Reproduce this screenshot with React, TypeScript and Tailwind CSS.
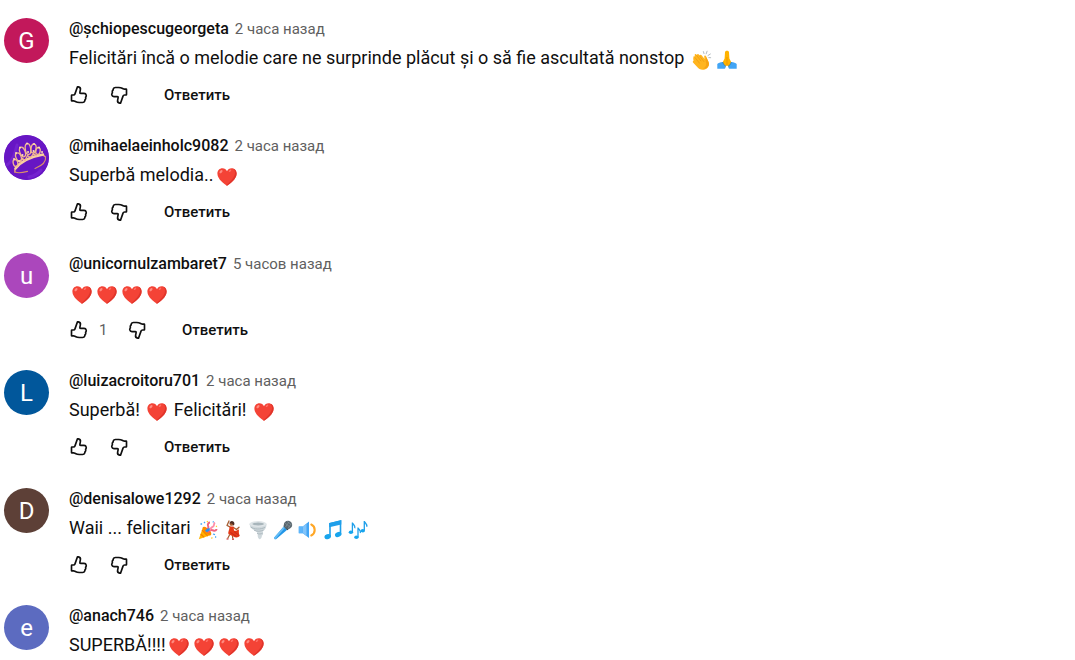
import React, { useState } from 'react';

type EmojiName =
  | 'heart'
  | 'clap'
  | 'pray'
  | 'party'
  | 'dancer'
  | 'tornado'
  | 'mic'
  | 'speaker'
  | 'note'
  | 'notes';

interface Comment {
  id: number;
  author: string;
  time: string;
  letter?: string;
  color: string;
  likes?: number;
  hideActions?: boolean;
  body: { text?: string; emoji?: EmojiName }[];
}

const heart = { emoji: 'heart' as const };

const comments: Comment[] = [
  {
    id: 1,
    author: '@șchiopescugeorgeta',
    time: '2 часа назад',
    letter: 'G',
    color: 'bg-[#c2185b]',
    body: [
      { text: 'Felicitări încă o melodie care ne surprinde plăcut și o să fie ascultată nonstop ' },
      { emoji: 'clap' },
      { emoji: 'pray' },
    ],
  },
  {
    id: 2,
    author: '@mihaelaeinholc9082',
    time: '2 часа назад',
    color: 'bg-[#6a1bc4]',
    body: [{ text: 'Superbă melodia..' }, heart],
  },
  {
    id: 3,
    author: '@unicornulzambaret7',
    time: '5 часов назад',
    letter: 'u',
    color: 'bg-[#ab47bc]',
    likes: 1,
    body: [heart, heart, heart, heart],
  },
  {
    id: 4,
    author: '@luizacroitoru701',
    time: '2 часа назад',
    letter: 'L',
    color: 'bg-[#01579b]',
    body: [{ text: 'Superbă! ' }, heart, { text: ' Felicitări! ' }, heart],
  },
  {
    id: 5,
    author: '@denisalowe1292',
    time: '2 часа назад',
    letter: 'D',
    color: 'bg-[#5d4037]',
    body: [
      { text: 'Waii ... felicitari ' },
      { emoji: 'party' },
      { emoji: 'dancer' },
      { emoji: 'tornado' },
      { emoji: 'mic' },
      { emoji: 'speaker' },
      { emoji: 'note' },
      { emoji: 'notes' },
    ],
  },
  {
    id: 6,
    author: '@anach746',
    time: '2 часа назад',
    letter: 'e',
    color: 'bg-[#5c6bc0]',
    hideActions: true,
    body: [{ text: 'SUPERBĂ!!!!' }, heart, heart, heart, heart],
  },
];

const emojiArt: Record<EmojiName, React.ReactNode> = {
  heart: (
    <>
      <path d="M10 18.8C7.6 16.8.6 12.6.4 6.7.3 3.4 2.7 1.3 5.4 1.3c2.1 0 3.8 1.2 4.6 3 .8-1.8 2.5-3 4.6-3 2.7 0 5.1 2.1 5 5.4-.2 5.9-7.2 10.1-9.6 12.1z" fill="#f44336" />
      <path d="M15.5 1.5c2 .9 2.900 2.900 2.400 5.400-.9 4.300-5 7.900-8.600 11.300l.7.600c2.400-2 9.400-6.200 9.600-12.100.1-2.900-1.800-4.900-4.100-5.200z" fill="#e0352b" />
      <ellipse cx="4" cy="4.600" rx="1.900" ry="1.100" transform="rotate(-45 4 4.600)" fill="#ff8a80" />
      <ellipse cx="13" cy="3.800" rx="1.500" ry=".8" transform="rotate(-40 13 3.800)" fill="#ff7168" />
    </>
  ),
  clap: (
    <>
      <path d="M1.400 7.500c-.5-1 .8-1.700 1.500-.8L2.700 5.200c-.2-1.300 1.200-1.700 1.800-.7l.5.700c0-1.200 1.300-1.500 1.900-.6l.7.900c.2-1 1.400-1.100 2-.3l3 3.800-.4-2.300c-.2-1.200 1.400-1.600 1.900-.5l2.200 5c1.500 3.500 0 6.700-2.900 8-3.200 1.300-6.500.3-8.400-2.400L1 12.600c-.6-1 .1-1.900.8-1.800z" fill="#ffb51f" />
      <path d="M1.200 8l1 5 3 3 2-4z" fill="#ffb51f" />
      <path d="M4.700 5.500l4.300 5.500M3.100 7.700l4.400 5.500M7.600 6l4.200 5.500" stroke="#eb9a0d" strokeWidth=".7" fill="none" strokeLinecap="round" />
      <path d="M13.600 10.500l.6 3c.3 2.300-1.200 4.200-3.200 5.300 4.600.2 7.200-3.500 5.400-7l-2.200-4.500z" fill="#f7a313" />
      <path d="M12 3.600l-.6-2M14.200 3.800l.9-2.600M16 5.500l2.400-1.500M16.800 7.600l1.900.1" stroke="#b5bdc1" strokeWidth="1" strokeLinecap="round" />
    </>
  ),
  pray: (
    <>
      <path d="M8 2.200c0-2 4-2 4 0l.4 6.200 2.400 4.800-2.400 3.800L10 15.500 7.600 17l-2.400-3.800 2.400-4.800z" fill="#ffb300" />
      <path d="M10 7v8.500" stroke="#e28a00" strokeWidth=".6" />
      <path d="M5.600 12c-2.600.3-4.100 1-5.300 2v4.800h7.400c.9-.9 1.100-1.800 1-2.600-1.500-.8-2.500-2.400-3.100-4.200zM14.400 12c2.600.3 4.100 1 5.300 2v4.800h-7.400c-.9-.9-1.100-1.800-1-2.600 1.500-.8 2.500-2.400 3.100-4.200z" fill="#42a5f5" />
      <path d="M5.600 12c.6 1.800 1.600 3.400 3.100 4.200M14.400 12c-.6 1.800-1.600 3.400-3.100 4.200" stroke="#1e7fd0" strokeWidth=".9" fill="none" />
    </>
  ),
  party: (
    <>
      <path d="M5 7L.8 19.200 13 15z" fill="#ffb300" />
      <path d="M4 10l5.700 6.100M2.600 14l3.600 3.400" stroke="#f57c00" strokeWidth="1.100" />
      <ellipse cx="9" cy="11" rx="5.600" ry="2.500" transform="rotate(45 9 11)" fill="#fb8c00" />
      <path d="M7.500 11c2.500-1 3.500-3 2.500-5.500-.5-1.500.5-3 2-3M10 12.500c1.500-2.500 3.500-3 5.500-2 1.600.6 3-.4 3-1.500" stroke="#f0627e" strokeWidth="2" fill="none" />
      <path d="M12 10.500c0-3 2-3 3.300-4.200 1.200-1 .2-2.500 1.600-3.800" stroke="#ff8fa8" strokeWidth="1.800" fill="none" />
      <path d="M8 11.500c1-1.200 2.200-2.200 3.700-2" stroke="#2196f3" strokeWidth="2.600" fill="none" />
      <path d="M2.500 4h1.600M6 2l1 1M15 14l2 .6M17 17h1.200M14.800 1.500l.8.800" stroke="#42a5f5" strokeWidth="1.300" />
      <path d="M9 1.200l.8 1M18 6l.9.700M13.500 17.500l.8 1" stroke="#ffca28" strokeWidth="1.300" />
    </>
  ),
  dancer: (
    <>
      <path d="M7 7L4 5.400 6 1M10.500 7.500l3 2 2.500-2.300" stroke="#a65d31" strokeWidth="1.300" fill="none" strokeLinecap="round" strokeLinejoin="round" />
      <circle cx="8.500" cy="3.900" r="1.900" fill="#a65d31" />
      <path d="M6.500 3.500c0-3.400 5-3.600 5 .8l-1.200 1.400C10 3.700 8.500 3.200 6.500 3.500z" fill="#4e2d22" />
      <path d="M6.500 6.400l4 .1.500 4c2.400 1.200 3.500-1.300 5-1.100-.2 2.200-.4 4.200.8 6.100-1.500 2.500-4.300 2.300-6.500 1L5.600 14.200c-1-2.300 1.100-4.400.9-7.800z" fill="#e53916" />
      <path d="M7.500 12.500c2 1.600 3.800 2.300 6 4M11 11.500c1.500 1.500 3 2 4.800 4" stroke="#b71c1c" strokeWidth=".7" fill="none" />
      <path d="M6.800 14.500l-2.200 4M9.500 16l.2 2.500" stroke="#a65d31" strokeWidth="1.200" />
      <path d="M3.500 19h2M9 19.200h2" stroke="#c62828" strokeWidth="1.200" />
    </>
  ),
  tornado: (
    <>
      <path d="M1.500 4c.7 4 3 5.200 5.300 6.600 2 1.300 3.100 2.400 2.900 4.400-.1 1.900.3 3 1.500 4.200 1.800-.3 2.900-1.700 2.600-3.600 1.500-.8 1.600-2.400.8-3.900C17.500 9.800 18.500 7 18.500 4z" fill="#cfd8dc" />
      <ellipse cx="10" cy="4" rx="8.700" ry="2.900" fill="#dfe5e8" />
      <ellipse cx="10.200" cy="4" rx="5.800" ry="1.500" fill="#a8b5bb" />
      <path d="M2.500 7c4 2.600 10 2.600 14.500.4M6 10.200c3 1.500 6.500 1.300 9.500-.2M9 13.400c2 .9 4 .7 5.700-.3" stroke="#a5b1b7" strokeWidth=".8" fill="none" />
    </>
  ),
  mic: (
    <>
      <path d="M10.800 6.500l3.400 3.300L3 19.200c-.8.5-2.200-.8-1.800-1.700z" fill="#2196e8" />
      <path d="M10.800 6.500l1.200 1.200L2.200 19.300c-.8-.2-1.300-1-.9-1.900z" fill="#67bdf5" />
      <path d="M10.300 6.100l4 4.100 1.500-1.200-4.200-4.300z" fill="#34424a" />
      <circle cx="15" cy="4.900" r="4.200" fill="#59666e" />
      <path d="M12 3l5.500 4.500M14 1.300l4.500 3.600M16.500 1.300l-4 5.700M18.500 3.300L15 8.300" stroke="#8b979d" strokeWidth=".6" />
    </>
  ),
  speaker: (
    <>
      <path d="M.8 6.500h4L11 1.400V18l-6.200-4.800h-4z" fill="#42a5f5" />
      <path d="M4.800 6.500L8.500 3.500V16l-3.700-2.800z" fill="#82c4fa" />
      <path d="M.8 6.500h4v6.700h-4z" fill="#5db5fa" />
      <path d="M13.300 4.500c4.500 2.200 4.500 8.700 0 11" stroke="#ffa726" strokeWidth="2.100" fill="none" strokeLinecap="round" />
    </>
  ),
  note: (
    <>
      <path d="M7 3.700L17.500 1v13.500M7 3v13.500" stroke="#1e9fea" strokeWidth="1.600" fill="none" />
      <path d="M6.200 2.900L18.300.3v4.300L6.200 7.200z" fill="#1e9fea" />
      <ellipse cx="4.700" cy="16.600" rx="3.300" ry="2.500" transform="rotate(-20 4.700 16.600)" fill="#18a5ed" />
      <ellipse cx="15.200" cy="14.500" rx="3.300" ry="2.500" transform="rotate(-20 15.200 14.500)" fill="#18a5ed" />
    </>
  ),
  notes: (
    <>
      <path d="M4.400 2.500v9.500M4.400 2.800c.8 2.200 3.300 2.400 2.400 5.400" stroke="#1e9fea" strokeWidth="1.300" fill="none" />
      <path d="M10 7.500V17M10 7.800c.8 2 3.200 2.400 2.300 5.200" stroke="#1e9fea" strokeWidth="1.300" fill="none" />
      <path d="M16.300 1v9.500M16.300 1.300c.8 2.200 3.300 2.400 2.400 5.400" stroke="#1e9fea" strokeWidth="1.300" fill="none" />
      <ellipse cx="2.900" cy="12.300" rx="2.200" ry="1.800" fill="#18a5ed" />
      <ellipse cx="8.400" cy="17.200" rx="2.200" ry="1.800" fill="#18a5ed" />
      <ellipse cx="14.800" cy="10.700" rx="2.200" ry="1.800" fill="#18a5ed" />
    </>
  ),
};

const emojiLabels: Record<EmojiName, string> = {
  heart: '❤',
  clap: '👏',
  pray: '🙏',
  party: '🎉',
  dancer: '💃',
  tornado: '🌪',
  mic: '🎤',
  speaker: '🔉',
  note: '🎵',
  notes: '🎶',
};

function Emoji({ name }: { name: EmojiName }) {
  return (
    <svg
      viewBox="0 0 20 20"
      role="img"
      aria-label={emojiLabels[name]}
      className="inline-block w-5 h-5 ml-[3px] mr-[2px] align-[-6px]"
    >
      {emojiArt[name]}
    </svg>
  );
}

function TiaraAvatar() {
  return (
    <svg viewBox="0 0 45 45" className="w-full h-full" fill="none" strokeLinecap="round">
      <circle cx="22.5" cy="22.5" r="22.5" fill="#6716c4" />
      <path d="M3 30c6-4 8-12 10-20M25 42c5-1 9-3 12-7" stroke="#7423cf" strokeWidth="3" />
      {/* band */}
      <path d="M11 37C9.500 31 19 25.500 27 22.500c7-2.500 13-3 14.500-.5" stroke="#e9a47c" strokeWidth="1.400" />
      <path d="M11 37c3 1.500 8 .6 12.500-.6M31 33.500c6-2.500 11.500-6.500 10.500-11.500" stroke="#d98f6a" strokeWidth="1.100" />
      <path d="M11.500 33.500c5-6.500 14-11.500 27.500-14" stroke="#f9cf9f" strokeWidth="2.400" />
      {/* arches */}
      <g stroke="#f1b78f" strokeWidth="1.300">
        <ellipse cx="11.500" cy="28" rx="2.300" ry="3.500" transform="rotate(-15 11.500 28)" />
        <ellipse cx="14.500" cy="22" rx="2.600" ry="4.200" transform="rotate(-22 14.500 22)" />
        <ellipse cx="18.500" cy="17" rx="2.600" ry="5" transform="rotate(-20 18.500 17)" />
        <ellipse cx="24" cy="14" rx="2.700" ry="5.500" transform="rotate(-8 24 14)" />
        <ellipse cx="29.500" cy="13.500" rx="2.500" ry="4.500" transform="rotate(10 29.500 13.500)" />
        <ellipse cx="34" cy="16" rx="2.200" ry="3.500" transform="rotate(10 34 16)" />
        <path d="M16 28l2-5 3 2.500 2.500-5 3 2.200 3-4 3 2" />
      </g>
      <path
        d="M10 24h.1M12 18h.1M16 12.500h.1M23 8.500h.1M30 9h.1M35 12.500h.1M38 17h.1M18.500 20h.1M24 17h.1M29.500 16h.1M15 26h.1"
        stroke="#ffdcb4"
        strokeWidth="1.900"
      />
    </svg>
  );
}

const THUMB_PATH =
  'M9.221 1.795a1 1 0 011.109-.656l1.040.173a4 4 0 013.252 4.784L14 9h4.061a3.664 3.664 0 013.576 2.868A3.680 3.680 0 0121 14.850l.020.087A3.815 3.815 0 0120 18.500v.043l-.010.227a2.820 2.820 0 01-.135.663A3.750 3.750 0 0116.295 22h-3.606l-.392-.007a12.002 12.002 0 01-5.223-1.388l-.343-.189-.270-.154a2.005 2.005 0 00-.863-.260l-.130-.004H3.500a1.500 1.500 0 01-1.500-1.500V12.500A1.500 1.500 0 013.500 11h1.790l.157-.013a1 1 0 00.724-.512l.063-.145 2.987-8.535Zm-1.100 9.196A3 3 0 015.290 13H4v4.998h1.468a4 4 0 011.986.528l.270.155.285.157A10 10 0 0012.690 20h3.606c.754 0 1.424-.483 1.663-1.200l.030-.126a.819.819 0 00.012-.131v-.872l.587-.586c.388-.388.577-.927.523-1.465l-.038-.230-.020-.087-.210-.900.550-.744A1.663 1.663 0 0018.061 11H14a2.002 2.002 0 01-1.956-2.418l.623-2.904a2 2 0 00-1.626-2.392l-.210-.035-2.710 7.741Z';

function ThumbIcon({ down = false }: { down?: boolean }) {
  return (
    <svg viewBox="0 0 24 24" fill="currentColor" className={down ? 'w-5 h-5 rotate-180' : 'w-5 h-5'}>
      <path d={THUMB_PATH} />
    </svg>
  );
}

function CommentActions({ initialLikes }: { initialLikes: number }) {
  const [vote, setVote] = useState<'up' | 'down' | null>(null);
  const likes = initialLikes + (vote === 'up' ? 1 : 0);

  return (
    <div className="flex items-center h-10 mt-[5px] -ml-[10px]">
      <button
        aria-label="Нравится"
        aria-pressed={vote === 'up'}
        onClick={() => setVote(vote === 'up' ? null : 'up')}
        className="flex items-center justify-center w-10 h-10 rounded-full hover:bg-black/10"
      >
        <ThumbIcon />
      </button>
      {likes > 0 && <span className="w-[18px] text-[15px] text-[#606060]">{likes}</span>}
      <button
        aria-label="Не нравится"
        aria-pressed={vote === 'down'}
        onClick={() => setVote(vote === 'down' ? null : 'down')}
        className="flex items-center justify-center w-10 h-10 rounded-full hover:bg-black/10"
      >
        <ThumbIcon down />
      </button>
      <button className="h-10 ml-[10px] px-[15px] rounded-full text-[15px] font-medium hover:bg-black/10">
        Ответить
      </button>
    </div>
  );
}

function CommentItem({ comment }: { comment: Comment }) {
  return (
    <li className="flex items-start gap-5 pb-5 even:pb-[21px] last:pb-0">
      <div
        className={`${comment.color} flex items-center justify-center shrink-0 w-[45px] h-[45px] rounded-full overflow-hidden text-2xl text-white`}
      >
        {comment.letter ?? <TiaraAvatar />}
      </div>

      <div className="flex-1 min-w-0">
        <div className="flex items-baseline gap-1.5 leading-[22px]">
          <a href="#" className="text-base leading-[22px] font-medium">
            {comment.author}
          </a>
          <a href="#" className="text-[15px] leading-[22px] text-[#606060]">
            {comment.time}
          </a>
        </div>

        <p className="mt-[5px] text-lg leading-[25px] whitespace-pre-wrap">
          {comment.body.map((part, i) =>
            part.emoji ? <Emoji key={i} name={part.emoji} /> : <span key={i}>{part.text}</span>
          )}
        </p>

        {!comment.hideActions && <CommentActions initialLikes={comment.likes ?? 0} />}
      </div>
    </li>
  );
}

export default function App() {
  return (
    <main className="bg-white text-[#0f0f0f] font-['Roboto',sans-serif]">
      <ul className="pt-[18px] pl-1 pr-4">
        {comments.map((comment) => (
          <CommentItem key={comment.id} comment={comment} />
        ))}
      </ul>
    </main>
  );
}
